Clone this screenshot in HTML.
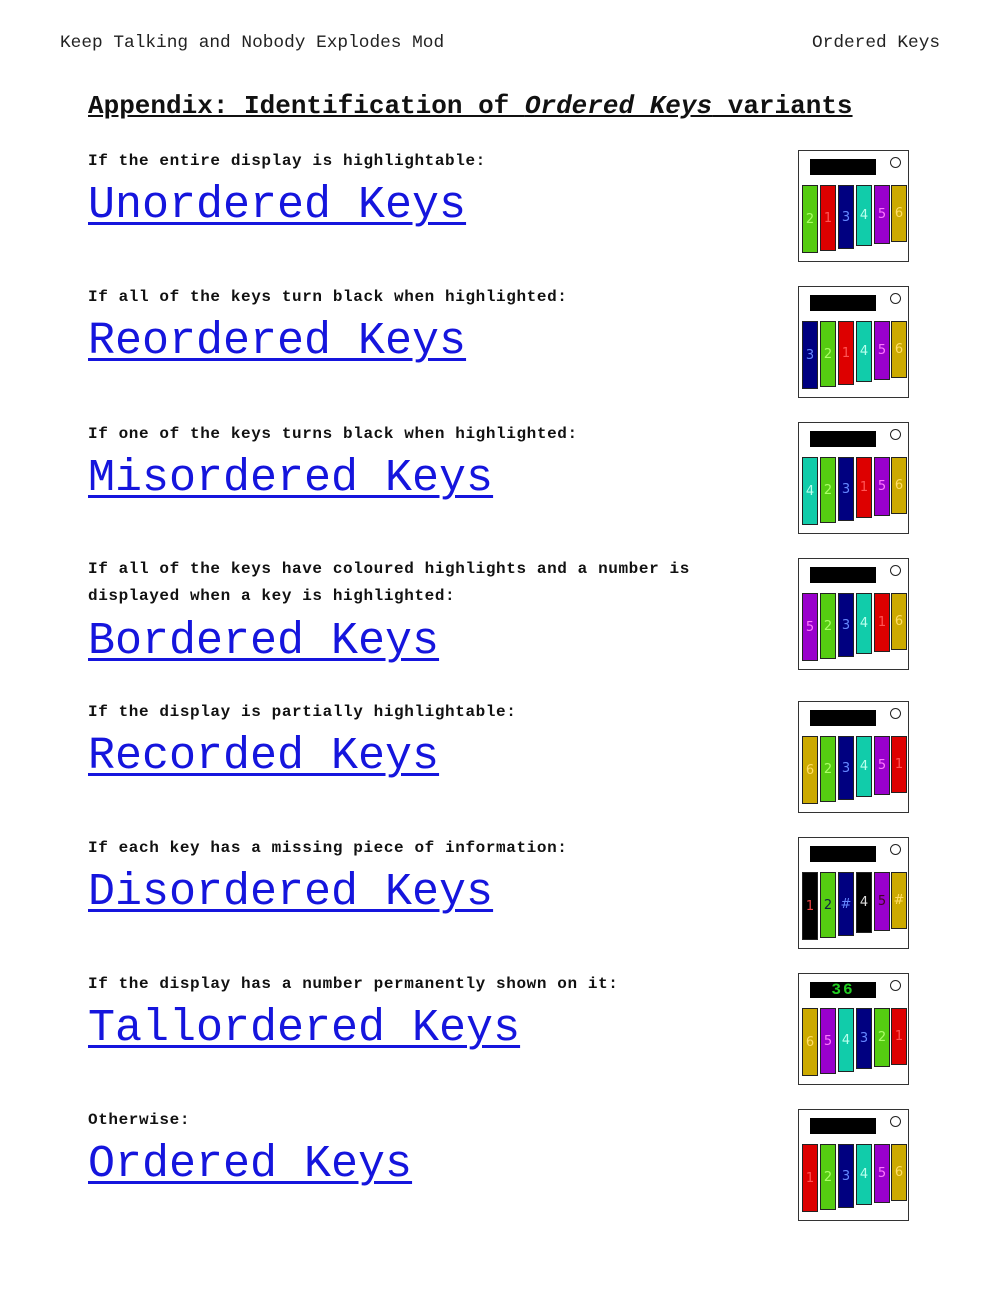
<!DOCTYPE html>
<html><head><meta charset="utf-8"><style>
body{margin:0;width:1000px;height:1300px;background:#fff;position:relative;overflow:hidden;font-family:"Liberation Mono",monospace}
.a{position:absolute;white-space:nowrap}
.hd{font-size:17.8px;color:#222;top:33px}
.h1{left:88px;top:91px;font-size:26px;font-weight:bold;text-decoration:underline;color:#111}
.c{left:88px;font-size:16px;font-weight:bold;letter-spacing:0.6px;color:#111;margin-top:2px}
.t{left:88px;font-size:45px;color:#1515dd;text-decoration:underline;text-decoration-thickness:3px;text-underline-offset:5px;margin-top:4px}
.box{position:absolute;left:798px;width:109px;height:110px;border:1px solid #333;background:#fff}
.bar{position:absolute;left:11px;top:8px;width:66px;height:16px;background:#000;color:#2c2;font-size:16px;font-weight:bold;text-align:center;line-height:16px;letter-spacing:2px}
.ci{position:absolute;left:91px;top:6px;width:9px;height:9px;border:1px solid #222;border-radius:50%}
.k{position:absolute;box-sizing:border-box;top:34px;width:16px;border:1px solid #222;font-family:"DejaVu Sans",sans-serif;font-size:13px;text-align:center;display:flex;align-items:center;justify-content:center}
</style></head><body>
<div class="a hd" style="left:60px">Keep Talking and Nobody Explodes Mod</div>
<div class="a hd" style="left:812px">Ordered Keys</div>
<div class="a h1">Appendix: Identification of <i>Ordered Keys</i> variants</div>

<div class="a c" style="top:150px">If the entire display is highlightable:</div>
<div class="a t" style="top:176px">Unordered Keys</div>
<div class="a c" style="top:286px">If all of the keys turn black when highlighted:</div>
<div class="a t" style="top:312px">Reordered Keys</div>
<div class="a c" style="top:423px">If one of the keys turns black when highlighted:</div>
<div class="a t" style="top:449px">Misordered Keys</div>
<div class="a c" style="top:558px">If all of the keys have coloured highlights and a number is</div>
<div class="a c" style="top:585px">displayed when a key is highlighted:</div>
<div class="a t" style="top:612px">Bordered Keys</div>
<div class="a c" style="top:701px">If the display is partially highlightable:</div>
<div class="a t" style="top:727px">Recorded Keys</div>
<div class="a c" style="top:837px">If each key has a missing piece of information:</div>
<div class="a t" style="top:863px">Disordered Keys</div>
<div class="a c" style="top:973px">If the display has a number permanently shown on it:</div>
<div class="a t" style="top:999px">Tallordered Keys</div>
<div class="a c" style="top:1109px">Otherwise:</div>
<div class="a t" style="top:1135px">Ordered Keys</div>

<div id="boxes"></div>
<script>
var C={g:['#55cc11','#aaff66'],r:['#dd0000','#ff5555'],n:['#000080','#6688ff'],t:['#11ccaa','#bbffee'],p:['#9900cc','#ff77ff'],y:['#ccaa00','#ffdd66']};
var L=[3,21,39,57,75,92],H=[68,66,64,61,59,57];
var data=[
[150,'',[['g','2'],['r','1'],['n','3'],['t','4'],['p','5'],['y','6']]],
[286,'',[['n','3'],['g','2'],['r','1'],['t','4'],['p','5'],['y','6']]],
[422,'',[['t','4'],['g','2'],['n','3'],['r','1'],['p','5'],['y','6']]],
[558,'',[['p','5'],['g','2'],['n','3'],['t','4'],['r','1'],['y','6']]],
[701,'',[['y','6'],['g','2'],['n','3'],['t','4'],['p','5'],['r','1']]],
[837,'',[[['#000','#e44'],'1'],[['#55cc11','#124'],'2'],['n','#'],[['#000','#ddd'],'4'],[['#9900cc','#402'],'5'],['y','#']]],
[973,'36',[['y','6'],['p','5'],['t','4'],['n','3'],['g','2'],['r','1']]],
[1109,'',[['r','1'],['g','2'],['n','3'],['t','4'],['p','5'],['y','6']]]];
var h='';
data.forEach(function(d){
 h+='<div class="box" style="top:'+d[0]+'px"><div class="bar">'+d[1]+'</div><div class="ci"></div>';
 d[2].forEach(function(k,i){var c=typeof k[0]=='string'?C[k[0]]:k[0];
  h+='<div class="k" style="left:'+L[i]+'px;height:'+H[i]+'px;background:'+c[0]+';color:'+c[1]+'">'+k[1]+'</div>';});
 h+='</div>';});
document.getElementById('boxes').innerHTML=h;
</script>
</body></html>
